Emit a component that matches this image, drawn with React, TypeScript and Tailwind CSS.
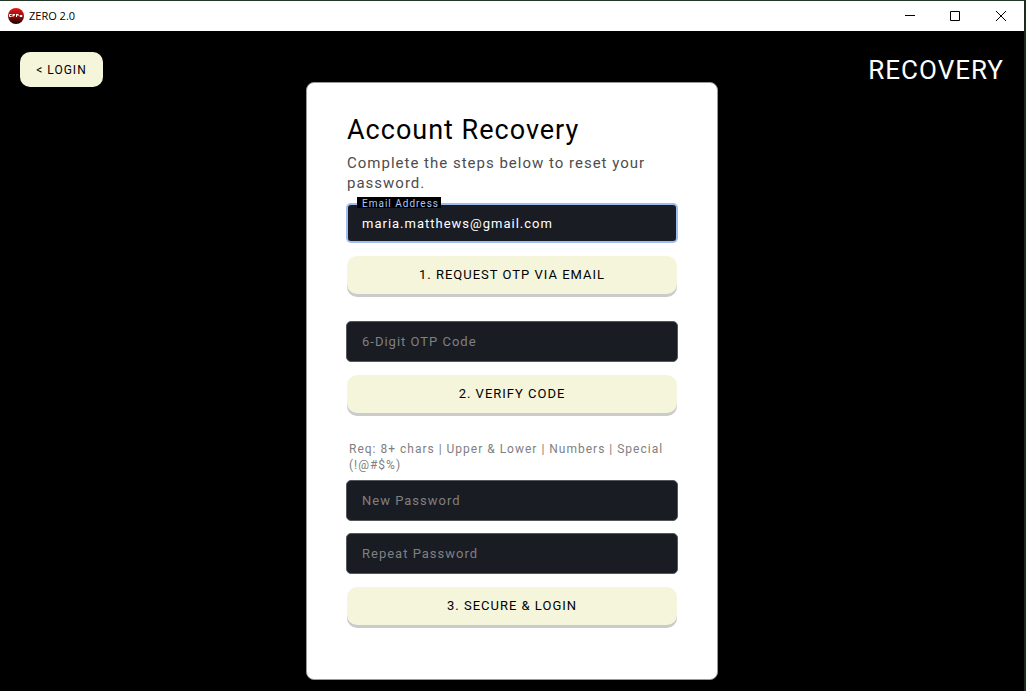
import React, { useState } from "react";

const buttonStyle =
  "mx-px h-[38px] rounded-[10px] bg-[#f5f5dc] text-[13px] tracking-[1px] text-black shadow-[0_3px_0_#cbcbcb]";

type FieldProps = {
  id: string;
  label: string;
  type?: string;
  className?: string;
};

function Field({ id, label, type = "text", className = "" }: FieldProps) {
  return (
    <div className={className}>
      <input
        id={id}
        type={type}
        aria-label={label}
        placeholder={label}
        className="block h-[41px] w-full rounded-[5px] border border-[#55575c] bg-[#1a1c24] px-[15px] text-[13px] tracking-[1px] text-white outline-none placeholder:text-[#808080]"
      />
    </div>
  );
}

function AppIcon() {
  return (
    <svg width="16" height="16" viewBox="0 0 16 16" aria-hidden="true">
      <defs>
        <linearGradient id="ball" x1="0" y1="0" x2="0" y2="1">
          <stop offset="0" stopColor="#e01818" />
          <stop offset="0.45" stopColor="#a80c0c" />
          <stop offset="1" stopColor="#160000" />
        </linearGradient>
      </defs>
      <circle cx="8" cy="8" r="8" fill="url(#ball)" />
      <path
        d="M1.5 6.5h2M1.5 8.5h2M1.5 6.5v2M5 6v3M5 6.5h2M5 7.5h1.5M8.5 6v3M8.5 6.5h2M10 7v1M12 7.5h2v1h-2z"
        stroke="#fff"
        strokeWidth="1"
        fill="none"
      />
    </svg>
  );
}

function TitleBar() {
  return (
    <div className="flex h-[31px] items-center border-t border-[#24382a] bg-white pl-2">
      <AppIcon />
      <span className="ml-[5px] font-['Open_Sans',sans-serif] text-[11px] text-black">
        ZERO 2.0
      </span>
      <div className="ml-auto flex h-full text-black">
        <button aria-label="Minimize" className="flex w-[45px] items-center justify-center">
          <svg width="10" height="10" viewBox="0 0 10 10" stroke="currentColor">
            <path d="M0 4.5h10" />
          </svg>
        </button>
        <button aria-label="Maximize" className="flex w-[46px] items-center justify-center">
          <svg width="10" height="10" viewBox="0 0 10 10" stroke="currentColor" fill="none">
            <path d="M.5.5h9v9h-9z" />
          </svg>
        </button>
        <button aria-label="Close" className="flex w-[46px] items-center justify-center">
          <svg width="10" height="10" viewBox="0 0 10 10" stroke="currentColor">
            <path d="M0 0l10 10M10 0L0 10" />
          </svg>
        </button>
      </div>
    </div>
  );
}

export default function App() {
  const [email, setEmail] = useState("maria.matthews@gmail.com");

  const handleSubmit = (event: React.FormEvent<HTMLFormElement>) => {
    event.preventDefault();
  };

  return (
    <div className="min-h-screen border-r-2 border-[#1c2c1c] bg-black font-[Roboto,sans-serif]">
      <TitleBar />
      <main className="grid grid-cols-[1fr_412px_1fr] items-start px-5 pt-[21px] pb-[11px]">
        <button className="h-[35px] w-[83px] justify-self-start rounded-[10px] bg-[#f5f5dc] text-xs tracking-[1px] text-black">
          &lt; LOGIN
        </button>

        <form
          onSubmit={handleSubmit}
          className="mt-[30px] flex flex-col rounded-lg border border-[#999] bg-white px-[39px] pt-[31px] pb-[54px]"
        >
          <h1 className="mx-px text-[27px] leading-8 tracking-[1px] text-black">
            Account Recovery
          </h1>
          <p className="mx-px mt-[7px] text-[15px] leading-5 tracking-[1px] text-[#4d4d4d]">
            Complete the steps below to reset your password.
          </p>

          {/* email has the floating label */}
          <div className="relative mt-[10px]">
            <label
              htmlFor="email"
              className="absolute -top-[6px] left-[11px] h-[11px] bg-black pr-0.5 pl-[5px] text-[10px] leading-[14px] tracking-[1px] text-[#a8c7fa]"
            >
              Email Address
            </label>
            <input
              id="email"
              type="email"
              value={email}
              onChange={(e) => setEmail(e.target.value)}
              className="block h-10 w-full rounded-[5px] border-2 border-[#a0bdf2] bg-[#1a1c24] px-[14px] text-[13px] tracking-[1px] text-white outline-none"
            />
          </div>
          <button type="button" className={`mt-[13px] ${buttonStyle}`}>
            1. REQUEST OTP VIA EMAIL
          </button>

          <Field id="otp" label="6-Digit OTP Code" className="mt-[27px]" />
          <button type="button" className={`mt-[13px] ${buttonStyle}`}>
            2. VERIFY CODE
          </button>

          <p className="mx-[3px] mt-7 text-xs leading-4 tracking-[1px] text-[#808080]">
            Req: 8+ chars | Upper &amp; Lower | Numbers | Special (!@#$%)
          </p>
          <Field id="new-password" type="password" label="New Password" className="mt-[7px]" />
          <Field id="repeat-password" type="password" label="Repeat Password" className="mt-3" />
          <button type="submit" className={`mt-[13px] ${buttonStyle}`}>
            3. SECURE &amp; LOGIN
          </button>
        </form>

        <h2 className="justify-self-end text-[26px] leading-9 tracking-[1px] text-white">
          RECOVERY
        </h2>
      </main>
    </div>
  );
}
